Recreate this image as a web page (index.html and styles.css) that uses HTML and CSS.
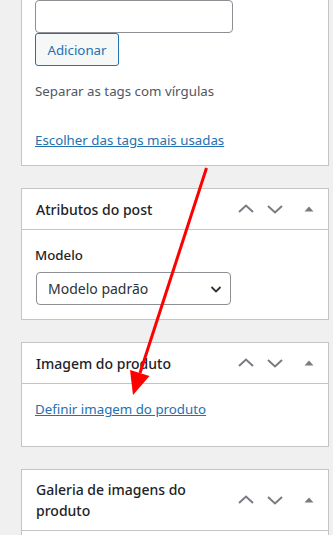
FILE: index.html
```html
<!DOCTYPE html>
<html lang="pt-BR">
<head>
  <meta charset="UTF-8" />
  <meta name="viewport" content="width=device-width, initial-scale=1.0" />
  <title>Editar produto</title>
  <link rel="stylesheet" href="styles.css">
</head>
<body>
  <div class="sidebar">
    <div class="postbox postbox-cut">
      <div class="inside inside-tags">
        <input type="text" class="tag-input">
        <button class="button">Adicionar</button>
        <p class="howto">Separar as tags com vírgulas</p>
        <p class="tagcloud-link"><a href="#">Escolher das tags mais usadas</a></p>
      </div>
    </div>

    <div class="postbox">
      <div class="postbox-header">
        <h2>Atributos do post</h2>
        <div class="handle-actions">
          <button class="handle" aria-label="Mover para cima">
            <svg width="16" height="16" viewBox="0 0 16 16"><path d="M1 11 L8 4.5 L15 11" /></svg>
          </button>
          <button class="handle" aria-label="Mover para baixo">
            <svg width="16" height="16" viewBox="0 0 16 16"><path d="M1 5 L8 11.5 L15 5" /></svg>
          </button>
          <button class="handle toggle" aria-label="Alternar painel">
            <svg width="10" height="8" viewBox="0 0 10 8"><polygon points="0.5,6.5 5,1.5 9.5,6.5" /></svg>
          </button>
        </div>
      </div>
      <div class="inside inside-attrs">
        <p class="field-label">Modelo</p>
        <div class="select">
          <span>Modelo padrão</span>
          <svg width="12" height="12" viewBox="0 0 12 12"><path d="M1.5 4 L6 8.5 L10.5 4" /></svg>
        </div>
      </div>
    </div>

    <div class="postbox">
      <div class="postbox-header">
        <h2>Imagem do produto</h2>
        <div class="handle-actions">
          <button class="handle" aria-label="Mover para cima">
            <svg width="16" height="16" viewBox="0 0 16 16"><path d="M1 11 L8 4.5 L15 11" /></svg>
          </button>
          <button class="handle" aria-label="Mover para baixo">
            <svg width="16" height="16" viewBox="0 0 16 16"><path d="M1 5 L8 11.5 L15 5" /></svg>
          </button>
          <button class="handle toggle" aria-label="Alternar painel">
            <svg width="10" height="8" viewBox="0 0 10 8"><polygon points="0.5,6.5 5,1.5 9.5,6.5" /></svg>
          </button>
        </div>
      </div>
      <div class="inside inside-image">
        <p><a href="#">Definir imagem do produto</a></p>
      </div>
    </div>

    <div class="postbox postbox-last">
      <div class="postbox-header">
        <h2>Galeria de imagens do produto</h2>
        <div class="handle-actions">
          <button class="handle" aria-label="Mover para cima">
            <svg width="16" height="16" viewBox="0 0 16 16"><path d="M1 11 L8 4.5 L15 11" /></svg>
          </button>
          <button class="handle" aria-label="Mover para baixo">
            <svg width="16" height="16" viewBox="0 0 16 16"><path d="M1 5 L8 11.5 L15 5" /></svg>
          </button>
          <button class="handle toggle" aria-label="Alternar painel">
            <svg width="10" height="8" viewBox="0 0 10 8"><polygon points="0.5,6.5 5,1.5 9.5,6.5" /></svg>
          </button>
        </div>
      </div>
      <div class="inside inside-gallery"></div>
    </div>
  </div>

  <!-- seta de anotação -->
  <svg class="annotation" width="333" height="535" viewBox="0 0 333 535">
    <line x1="206.5" y1="168" x2="140" y2="373" />
    <polygon points="133,395 130,370 149.5,376" />
  </svg>
</body>
</html>
```

FILE: styles.css
```css
html,
body {
  height: 535px;
  overflow: hidden;
}

body {
  margin: 0;
  background: #f0f0f1;
  font-family: "Noto Sans", "Open Sans", sans-serif;
  font-size: 13.3px;
  line-height: 20px;
  color: #1d2327;
}

.sidebar {
  padding: 0 4px 0 21px;
}

.postbox {
  background: #fff;
  border: 1px solid #c3c4c7;
  margin-bottom: 22px;
}

.postbox-cut {
  border-top: none;
}

.postbox-last {
  margin-bottom: 0;
}

.postbox-header {
  display: flex;
  align-items: center;
  min-height: 40px;
  border-bottom: 1px solid #c3c4c7;
}

.postbox-header h2 {
  flex: 1;
  margin: 0;
  padding: 9px 0 9px 14px;
  font-size: 14px;
  line-height: 21px;
  font-weight: 500;
  color: #1d2327;
}

.handle-actions {
  display: flex;
  align-items: center;
  padding-right: 1px;
}

.handle {
  width: 29px;
  height: 36px;
  padding: 0;
  border: none;
  background: none;
  display: flex;
  align-items: center;
  justify-content: center;
  cursor: pointer;
}

.handle svg path {
  fill: none;
  stroke: #787c82;
  stroke-width: 2;
}

.handle.toggle {
  width: 36px;
  margin-left: 2px;
}

.handle.toggle polygon {
  fill: #787c82;
}

.inside {
  padding: 0 13px;
}

.inside p {
  margin: 0;
}

a {
  color: #2271b1;
  text-decoration: underline;
}

.tag-input {
  display: block;
  box-sizing: border-box;
  width: 198px;
  height: 33px;
  margin: 0;
  border: 1px solid #8c8f94;
  border-radius: 4px;
  background: #fff;
}

.button {
  display: block;
  box-sizing: border-box;
  width: 84px;
  height: 33px;
  margin: 0;
  padding: 0 10px;
  border: 1px solid #2271b1;
  border-radius: 3px;
  background: #f6f7f7;
  color: #2271b1;
  font-family: inherit;
  font-size: 13.3px;
}

.inside-tags .howto {
  margin-top: 15px;
  color: #50575e;
}

.inside-tags .tagcloud-link {
  margin-top: 29px;
  padding-bottom: 15px;
}

.inside-attrs {
  padding-top: 15px;
  padding-bottom: 14px;
}

.field-label {
  font-weight: 500;
  margin-bottom: 7px !important;
}

.select {
  box-sizing: border-box;
  width: 195px;
  height: 33px;
  margin-left: 1px;
  padding: 0 8px 0 11px;
  border: 1px solid #8c8f94;
  border-radius: 4px;
  display: flex;
  align-items: center;
  justify-content: space-between;
  color: #2c3338;
  font-size: 14px;
}

.select svg path {
  fill: none;
  stroke: #2c3338;
  stroke-width: 1.8;
}

.inside-image {
  padding-top: 15px;
  padding-bottom: 27px;
}

.inside-gallery {
  height: 40px;
}

.annotation {
  position: absolute;
  top: 0;
  left: 0;
  pointer-events: none;
}

.annotation line {
  stroke: #ff0000;
  stroke-width: 3;
}

.annotation polygon {
  fill: #ff0000;
}
```
